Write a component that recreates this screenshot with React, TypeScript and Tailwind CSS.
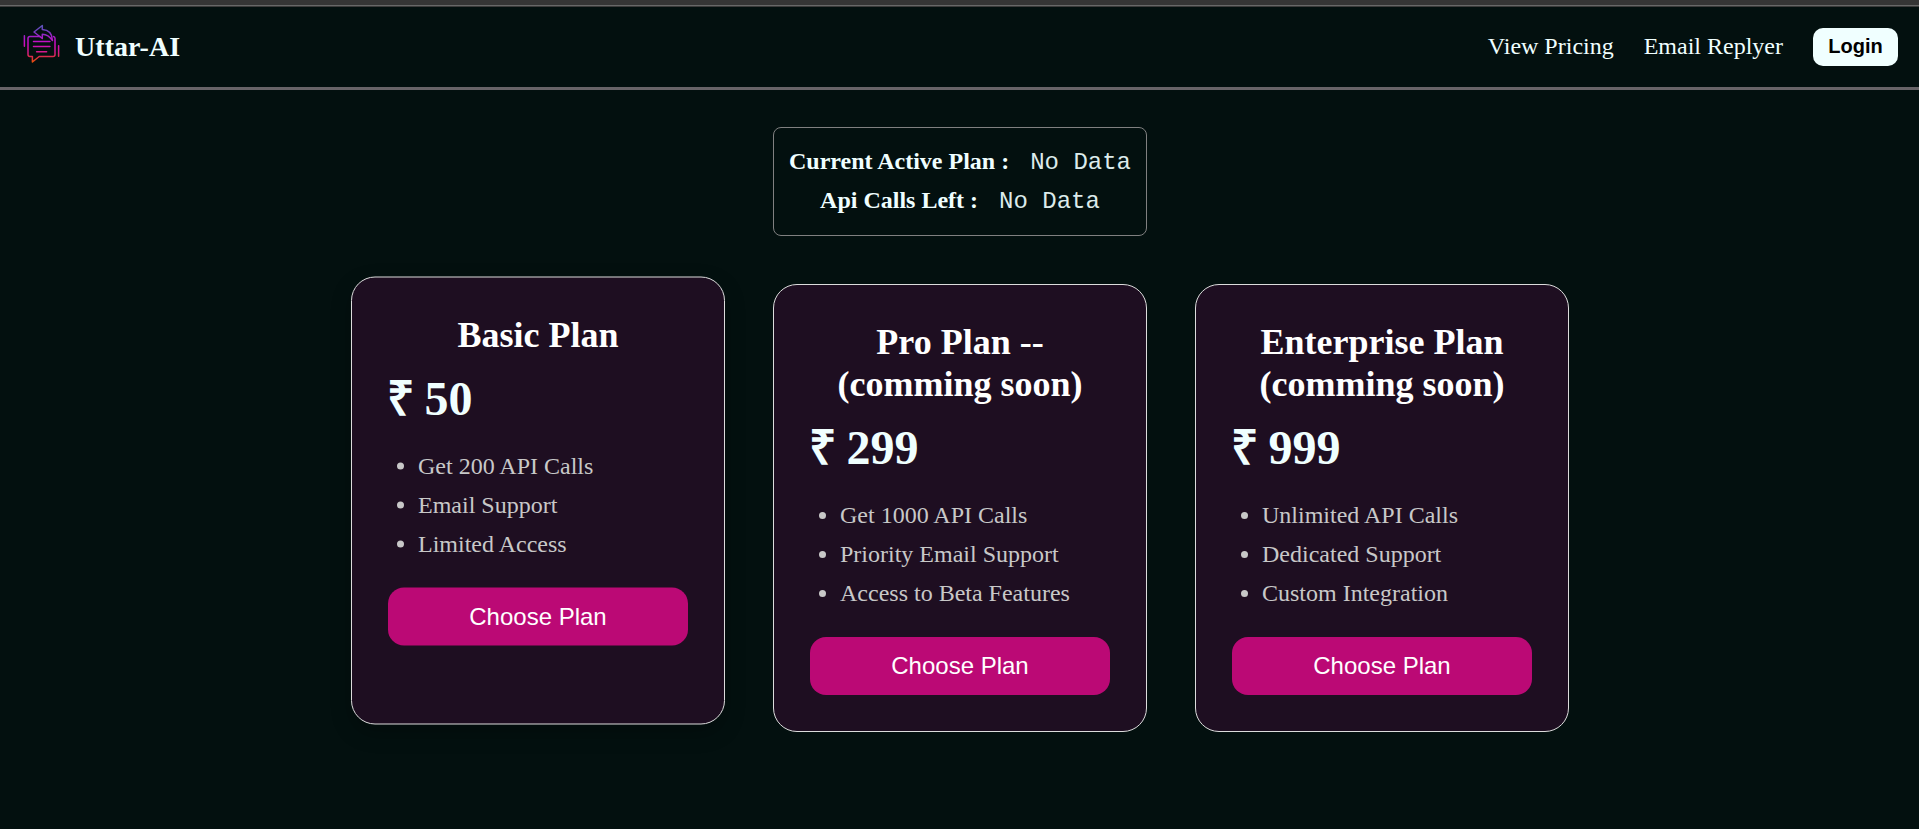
import React from "react";

type Plan = { name: string; price: string; features: string[]; raised?: boolean };

const plans: Plan[] = [
  { name: "Basic Plan", price: "50", features: ["Get 200 API Calls", "Email Support", "Limited Access"], raised: true },
  { name: "Pro Plan -- (comming soon)", price: "299", features: ["Get 1000 API Calls", "Priority Email Support", "Access to Beta Features"] },
  { name: "Enterprise Plan (comming soon)", price: "999", features: ["Unlimited API Calls", "Dedicated Support", "Custom Integration"] },
];

function Logo() {
  return (
    <svg className="mb-2 h-10 w-10 shrink-0" viewBox="0 0 40 40" fill="none" stroke="url(#logo-gradient)" strokeWidth="1.5" strokeLinecap="round" strokeLinejoin="round">
      <defs>
        <linearGradient id="logo-gradient" gradientUnits="userSpaceOnUse" x1="20" y1="1" x2="20" y2="39.5">
          <stop offset="0" stopColor="#5858b8" />
          <stop offset="0.18" stopColor="#7040c0" />
          <stop offset="0.34" stopColor="#a81cc8" />
          <stop offset="0.5" stopColor="#cc0cc4" />
          <stop offset="0.72" stopColor="#d41890" />
          <stop offset="0.87" stopColor="#dc3040" />
          <stop offset="1" stopColor="#ec5408" />
        </linearGradient>
      </defs>
      <path d="M20 13.5H10a2 2 0 0 0-2 2V31.5a2 2 0 0 0 2 2h2.4v5.5l6.8-5.5H33a2 2 0 0 0 2-2v-16a2 2 0 0 0-1.5-1.9" />
      <path d="M22.3 2.5 14 9l8.3 6.5v-4.2c5 .2 7.6 2.4 10.2 6.2-.3-6.8-4.3-10.6-10.2-10.9z" />
      <path d="M13.5 18.5h16.4M13.5 23.6h16.4M16.6 28.7h10M4.4 12.8v10.5M38.6 22.8v10.5" />
    </svg>
  );
}

function PlanCard({ name, price, features, raised }: Plan) {
  return (
    <section className={`flex h-[448px] w-[374px] flex-col rounded-3xl border border-[#dcdcdc] bg-[#1e0e21] px-9 pt-9 ${raised ? "-translate-y-[7.5px] shadow-[0_8px_20px_rgba(0,0,0,0.25)]" : ""}`}>
      <h2 className="px-5 text-center text-[36px] leading-[42px] font-bold text-white">{name}</h2>
      <div className="mt-3.5 h-[58px] text-[48px] leading-[58px] font-bold text-[#f0ffff]"><span className="-ml-px tracking-[-1.5px]">₹</span> {price}</div>
      <ul className="mt-[19px] list-disc pl-[30px] text-2xl leading-[39px] text-[#c8c8c8]">
        {features.map((f) => <li key={f}>{f}</li>)}
      </ul>
      <button className="mt-6 h-[58px] w-[300px] shrink-0 rounded-2xl bg-[#bb0975] font-['Liberation_Sans',sans-serif] text-2xl text-white">Choose Plan</button>
    </section>
  );
}

function Stat({ label }: { label: string }) {
  return (
    <div className="flex h-[39px] items-baseline justify-center leading-[39px]">
      <b>{label}</b>
      <span className="ml-[21px] font-['Liberation_Mono',monospace] text-[#dcebeb]">No Data</span>
    </div>
  );
}

export default function App() {
  return (
    <div className="flex h-[829px] w-full flex-col bg-[#03100f] font-['Liberation_Serif',serif] text-[#f0ffff]">
      <div className="h-[5px] shrink-0 bg-[#353535]" />
      <div className="h-px shrink-0 bg-[#686868]" />
      <div className="h-px shrink-0 bg-[#3a3a3a]" />
      <header className="flex h-[83px] shrink-0 items-center border-b-3 border-[#686468] pr-[21px] pl-5">
        <Logo />
        <h1 className="ml-[15px] text-[28px] font-bold tracking-[0.05px]">Uttar-AI</h1>
        <nav className="ml-auto flex items-center text-2xl">
          <a className="pb-0.5">View Pricing</a>
          <a className="ml-[30px] pb-0.5">Email Replyer</a>
          <button className="ml-[30px] h-[38px] w-[85px] rounded-[10px] bg-[#f0ffff] pb-0.5 font-['Liberation_Sans',sans-serif] text-xl font-bold text-black">Login</button>
        </nav>
      </header>
      <main className="flex flex-col items-center pl-px">
        <div className="mt-[37px] h-[109px] w-[374px] rounded-lg border border-[#808080] pt-[14px] text-2xl">
          <Stat label="Current Active Plan :" />
          <Stat label="Api Calls Left :" />
        </div>
        <div className="mt-12 flex gap-12">
          {plans.map((p) => <PlanCard key={p.name} {...p} />)}
        </div>
      </main>
    </div>
  );
}
